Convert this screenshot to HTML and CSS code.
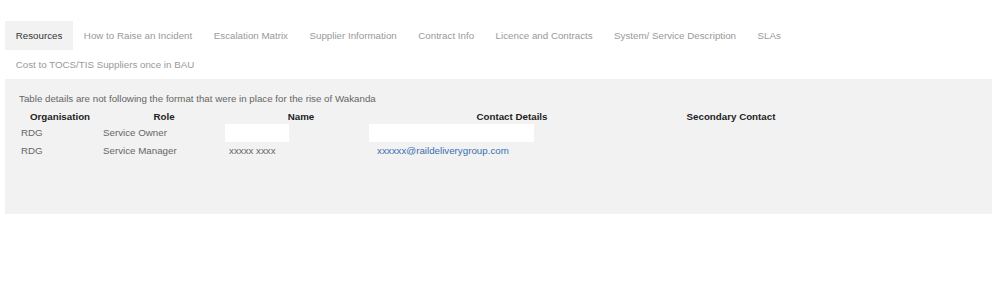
FILE: index.html
```html
<!DOCTYPE html>
<html lang="en">
<head>
    <meta charset="UTF-8">
    <meta name="viewport" content="width=device-width, initial-scale=1.0">
    <title>Resources</title>
    <link rel="stylesheet" href="styles.css">
</head>
<body>
    <div class="page">
        <ul class="tabs">
            <li class="active"><a href="#">Resources</a></li>
            <li><a href="#">How to Raise an Incident</a></li>
            <li><a href="#">Escalation Matrix</a></li>
            <li><a href="#">Supplier Information</a></li>
            <li><a href="#">Contract Info</a></li>
            <li><a href="#">Licence and Contracts</a></li>
            <li><a href="#">System/ Service Description</a></li>
            <li><a href="#">SLAs</a></li>
            <li><a href="#">Cost to TOCS/TIS Suppliers once in BAU</a></li>
        </ul>

        <!-- Contenido de la pestaña activa -->
        <div class="panel">
            <p class="note">Table details are not following the format that were in place for the rise of Wakanda</p>
            <table class="contacts">
                <colgroup>
                    <col class="c-org">
                    <col class="c-role">
                    <col class="c-name">
                    <col class="c-contact">
                    <col class="c-second">
                </colgroup>
                <tr>
                    <th>Organisation</th>
                    <th>Role</th>
                    <th>Name</th>
                    <th>Contact Details</th>
                    <th>Secondary Contact</th>
                </tr>
                <tr>
                    <td>RDG</td>
                    <td>Service Owner</td>
                    <td><div class="blank blank-name"></div></td>
                    <td><div class="blank blank-contact"></div></td>
                    <td></td>
                </tr>
                <tr>
                    <td>RDG</td>
                    <td>Service Manager</td>
                    <td>xxxxx xxxx</td>
                    <td><a href="#">xxxxxx@raildeliverygroup.com</a></td>
                    <td></td>
                </tr>
            </table>
        </div>
    </div>
</body>
</html>
```

FILE: styles.css
```css
body {
    margin: 0;
    background-color: #fff;
    font-family: "Liberation Sans", Arial, sans-serif;
    font-size: 9.75px;
    color: #666;
}
.page {
    padding: 21px 7px 0 5px;
}
.tabs {
    display: flex;
    flex-wrap: wrap;
    max-width: 960px;
    list-style: none;
    margin: 0;
    padding: 0;
}
.tabs a {
    display: block;
    padding: 7.5px 10.75px;
    line-height: 14px;
    color: #999;
    text-decoration: none;
}
.tabs li.active a {
    background-color: #f2f2f2;
    color: #333;
}
.panel {
    background-color: #f2f2f2;
    height: 135px;
    box-sizing: border-box;
    padding: 13px 14px;
}
.note {
    margin: 0 0 2.5px;
    line-height: 14px;
}
.contacts {
    border-collapse: collapse;
    table-layout: fixed;
    width: 794px;
}
.c-org { width: 82px; }
.c-role { width: 126px; }
.c-name { width: 148px; }
.c-contact { width: 274px; }
.c-second { width: 164px; }
.contacts th {
    height: 15px;
    padding: 0 2px;
    color: #222;
    font-weight: bold;
    text-align: center;
}
.contacts td {
    height: 18px;
    padding: 0 2px;
    text-align: left;
}
.contacts a {
    color: #3a6fb0;
    text-decoration: none;
}
.blank {
    height: 18px;
    background-color: #fff;
}
.blank-name {
    width: 64px;
    margin-left: -4px;
}
.blank-contact {
    width: 165px;
    margin-left: -8px;
}
```
